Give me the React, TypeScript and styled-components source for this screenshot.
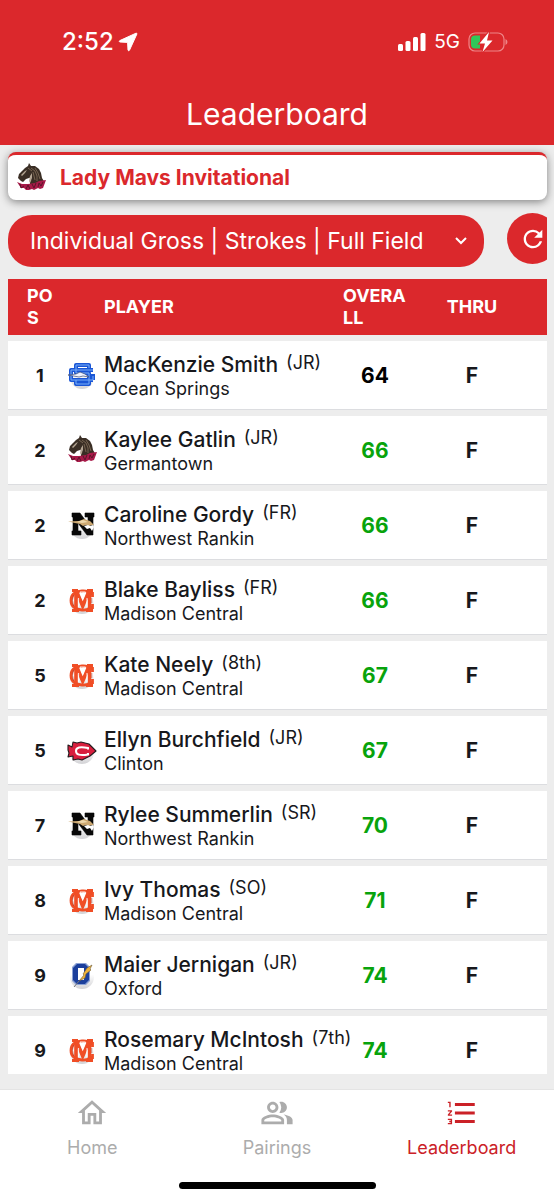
import React from "react";
import styled, { createGlobalStyle } from "styled-components";
import {
  MdFormatListNumbered,
  MdOutlineHome,
  MdOutlinePeopleAlt,
  MdRefresh,
} from "react-icons/md";

const RED = "#db282c";

const GlobalStyle = createGlobalStyle`
  * { box-sizing: border-box; }
  body { margin: 0; background: #ededed; }
  body, button, select {
    font-family: Inter, "Liberation Sans", sans-serif;
  }
`;

const Screen = styled.div`
  display: flex;
  flex-direction: column;
  height: 100vh;
  background: #ededed;
  color: #17181c;
`;

const Header = styled.header`
  flex: none;
  background: ${RED};
  color: #fff;
`;

const StatusBar = styled.div`
  display: flex;
  align-items: center;
  justify-content: space-between;
  height: 84px;
  padding: 0 46px 0 62px;
`;

const StatusGroup = styled.div`
  display: flex;
  align-items: center;
  gap: 8px;
`;

const Clock = styled.time`
  font-size: 24px;
  line-height: 28px;
  font-weight: 500;
  margin-right: -4px;
`;

const Network = styled.span`
  font-size: 19px;
  line-height: 24px;
`;

const Title = styled.h1`
  margin: 0;
  padding: 12px 0 13px;
  font-size: 30px;
  line-height: 36px;
  font-weight: 400;
  text-align: center;
`;

const Main = styled.main`
  flex: 1;
  min-height: 0;
  display: flex;
  flex-direction: column;
  padding: 7px 7px 15px 8px;
`;

const EventCard = styled.section`
  flex: none;
  display: flex;
  align-items: center;
  gap: 14px;
  height: 48px;
  padding: 0 8px;
  background: #fff;
  border-top: 3px solid ${RED};
  border-radius: 8px;
  box-shadow: 0 2px 8px rgba(0, 0, 0, 0.45);
`;

const EventName = styled.h2`
  margin: 0;
  color: ${RED};
  font-size: 21px;
  line-height: 28px;
  font-weight: 700;
`;

const Filters = styled.div`
  flex: none;
  display: flex;
  align-items: center;
  gap: 23px;
  padding: 14px 0 11px;
`;

const SelectWrap = styled.label`
  flex: 1;
  min-width: 0;
  display: grid;
  align-items: center;
  & > * { grid-area: 1 / 1; }
`;

const Select = styled.select`
  appearance: none;
  width: 100%;
  height: 52px;
  padding: 0 40px 0 22px;
  border: 0;
  border-radius: 24px;
  background: ${RED};
  color: #fff;
  font-size: 23px;
  text-overflow: ellipsis;
`;

const Chevron = styled.svg`
  justify-self: end;
  margin-right: 16px;
  pointer-events: none;
`;

const RefreshClip = styled.div`
  width: 40px;
  height: 56px;
  margin: -1px 0;
  overflow: hidden;
`;

const RefreshButton = styled.button`
  display: flex;
  align-items: center;
  justify-content: center;
  width: 51px;
  height: 51px;
  padding: 0;
  border: 0;
  border-radius: 50%;
  background: ${RED};
  color: #fff;
`;

const Board = styled.div`
  flex: 1;
  min-height: 0;
  overflow: hidden auto;
  scrollbar-width: none;
`;

const Table = styled.table`
  width: 100%;
  table-layout: fixed;
  border-collapse: separate;
  border-spacing: 0 6px;
  margin-top: -6px;
`;

const Col = styled.col<{ $width?: number }>`
  width: ${(p) => (p.$width ? `${p.$width}px` : "auto")};
`;

const HeadCell = styled.th<{ $indent?: number; $center?: boolean }>`
  height: 56px;
  padding: 0 0 0 ${(p) => p.$indent ?? 0}px;
  background: ${RED};
  color: #fff;
  font-size: 18px;
  line-height: 22px;
  font-weight: 700;
  text-align: ${(p) => (p.$center ? "center" : "left")};
  word-break: break-all;
`;

const Cell = styled.td`
  height: 69px;
  padding: 0;
  background: #fff;
  border-bottom: 1px solid #dcdde0;
  white-space: nowrap;
`;

const PosCell = styled(Cell)`
  padding-left: 8px;
  font-size: 18px;
  font-weight: 700;
  text-align: center;
`;

const LogoCell = styled(Cell)`
  padding-left: 3px;
  & > svg { display: block; }
`;

const PlayerCell = styled(Cell)`
  padding-top: 2px;
`;

const ScoreCell = styled(Cell)<{ $tone: string }>`
  color: ${(p) => p.$tone};
  font-size: 21px;
  font-weight: 700;
  text-align: center;
`;

const PlayerLine = styled.div`
  display: flex;
  align-items: flex-start;
  gap: 8px;
`;

const PlayerName = styled.span`
  font-size: 21px;
  line-height: 26px;
  font-weight: 500;
`;

const Grade = styled.span`
  font-size: 18px;
  line-height: 22px;
`;

const School = styled.div`
  font-size: 18px;
  line-height: 22px;
`;

const TabBar = styled.nav`
  flex: none;
  display: grid;
  grid-template-columns: repeat(3, 1fr);
  padding-top: 6px;
  background: #fff;
  border-top: 1px solid #e4e4e4;
`;

const Tab = styled.a<{ $active?: boolean }>`
  display: flex;
  flex-direction: column;
  align-items: center;
  gap: 7px;
  color: ${(p) => (p.$active ? "#cb2127" : "#acacac")};
  font-size: 18px;
  line-height: 22px;
  text-decoration: none;
`;

const HomeIndicator = styled.div`
  grid-column: 1 / -1;
  justify-self: center;
  width: 197px;
  height: 7px;
  margin: 23px 0 11px;
  border-radius: 4px;
  background: #000;
`;

type Team = "os" | "mavs" | "nwr" | "mc" | "clinton" | "oxford";

const teamArt: Record<Team, React.ReactNode> = {
  os: (
    <g fill="none" strokeLinejoin="round">
      <g stroke="#1a56d6" strokeWidth="4">
        <path d="M22 8V5H9v8h13v11H9v-4" />
        <path d="M26 10H4v10h22M15 10v3" />
        <path d="M26 14v6" />
      </g>
      <g stroke="#79aef8" strokeWidth="1">
        <path d="M22 8V5H9v8h13v11H9v-4" />
        <path d="M26 10H4v10h22v-4" />
      </g>
      <path d="M1 15l8-1 4-2 5 2 4 3-6-1-4 1z" fill="#eef3ff" stroke="#3b4b72" strokeWidth=".7" />
    </g>
  ),
  mavs: (
    <>
      <path d="M2 15 3 11 6 8 9 5 12 3 13 0l2 3 4 0 4 3 2 4 1 5 3 5-6 1-9 1 0-4 2-4-3 1-3 1-3 3-2-1z" fill="#3a2e25" />
      <path d="M5 12 9 8l2-1-2 3-3 3zM14 13l2-3 0 4-1 4-1 2-1-2z" fill="#b5a694" />
      <path d="M15 5l4 3 2 5 0 5M19 5l3 5 2 6M17 9l2 8M12 5l4 3" stroke="#85715c" fill="none" strokeWidth=".8" />
      <path d="M1 19l5 2 6 0 7-1 4-2 7-1-3 8-3 1-2-1-4 2-2-1-3 1-3 0-2-2-3 0z" fill="#a81a49" />
      <path d="M4 21l1 4 3-2M10 26l2-4 2 4M16 21l2 4 2-5M22 24l1-4 2 3 2-4" stroke="#5a1429" fill="none" strokeWidth="1" />
    </>
  ),
  nwr: (
    <>
      <path d="M5 3h8l8 11V7h-3V3h9v4h-1v18h-6L11 13v8h3v4H5v-4h1V7H5z" fill="#080808" stroke="#080808" strokeWidth=".6" />
      <path d="M1 11.500 12 11l5-2 6 2 4 4-2 0-3 1-3-1-3 1-3-2-5-1z" fill="#cda972" />
      <path d="M10 12l6-2 5 2-6 1z" fill="#efd9ae" />
      <path d="M17 16l4-1 2 1 3-1 1 2-2 4-2-3-3 1z" fill="#fff" />
    </>
  ),
  mc: (
    <g fill="none" stroke="#f04e26">
      <path d="M25.500 7v5M25.500 9.500Q21 5.500 15 6 4 7 4 15.500T15 25q6 .5 10.500-3.500M25.500 19v5" strokeWidth="2.800" />
      <path d="M5 5.500h6M20 5.500h6M5 25.500h7M19 25.500h7" strokeWidth="3" />
      <path d="M9 5v20M22.500 5v20" strokeWidth="3.600" />
      <path d="M9 5l6.700 16L22.500 5" strokeWidth="3.600" strokeLinejoin="miter" />
      <path d="M11.600 13v9M20 13v9M13 7l2.700 7L18.500 7z" stroke="#fff" strokeWidth=".9" />
      <path d="M6.500 10q-2 5 0 11M24.800 13v5" stroke="#a64132" strokeWidth=".6" />
    </g>
  ),
  clinton: (
    <>
      <path d="M1 10l4 2 1-5 4 1 4-1 8 2 7 7-6 5-8 4-4-1-5 1 0-4-5 1 1-4-1-3z" fill="#d81f3e" stroke="#241b1e" strokeWidth="1.100" strokeLinejoin="round" />
      <path d="M21 14.500V13Q9 10.500 9 16t12 3.500V18" fill="none" stroke="#fff" strokeWidth="2" />
    </>
  ),
  oxford: (
    <>
      <path d="M9 3h10l4 4v14l-4 4H9l-4-4V7z" fill="#8ba1d4" />
      <path d="M10 4h8l4 4v12l-4 4h-8l-4-4V8z" fill="#1b3f9c" />
      <path d="M11 8h6v12h-6z" fill="#fff" />
      <path d="M25 5l-5 3-4 6 1 1-5 6 6-3 1-4 5-4-1-1z" fill="#edb23a" stroke="#6b5a39" strokeWidth=".6" />
      <path d="M12 21l-5 6" stroke="#77777c" strokeWidth="1" />
    </>
  ),
};

const TeamLogo = ({ team, id }: { team: Team; id: string }) => (
  <svg width="30" height="30" viewBox="0 0 30 30" aria-hidden="true">
    <defs>
      <linearGradient id={id} x1="0" y1="0" x2="0" y2="1">
        <stop offset=".4" stopColor="#fff" />
        <stop offset="1" stopColor="#d2d2d5" />
      </linearGradient>
    </defs>
    {team !== "mavs" && <circle cx="15" cy="17" r="12" fill={`url(#${id})`} />}
    {teamArt[team]}
  </svg>
);

const players: { pos: number; team: Team; name: string; grade: string; school: string; score: number }[] = [
  { pos: 1, team: "os", name: "MacKenzie Smith", grade: "JR", school: "Ocean Springs", score: 64 },
  { pos: 2, team: "mavs", name: "Kaylee Gatlin", grade: "JR", school: "Germantown", score: 66 },
  { pos: 2, team: "nwr", name: "Caroline Gordy", grade: "FR", school: "Northwest Rankin", score: 66 },
  { pos: 2, team: "mc", name: "Blake Bayliss", grade: "FR", school: "Madison Central", score: 66 },
  { pos: 5, team: "mc", name: "Kate Neely", grade: "8th", school: "Madison Central", score: 67 },
  { pos: 5, team: "clinton", name: "Ellyn Burchfield", grade: "JR", school: "Clinton", score: 67 },
  { pos: 7, team: "nwr", name: "Rylee Summerlin", grade: "SR", school: "Northwest Rankin", score: 70 },
  { pos: 8, team: "mc", name: "Ivy Thomas", grade: "SO", school: "Madison Central", score: 71 },
  { pos: 9, team: "oxford", name: "Maier Jernigan", grade: "JR", school: "Oxford", score: 74 },
  { pos: 9, team: "mc", name: "Rosemary McIntosh", grade: "7th", school: "Madison Central", score: 74 },
];

const LocationArrow = () => (
  <svg width="20" height="20" viewBox="0 0 20 20" aria-hidden="true">
    <path d="M18 1.200 1.800 8.600q-1.400 1 .2 1.400l7.600.4.4 7.600q.5 1.600 1.500.2L18.900 2q.2-1.100-.9-.8z" fill="#fff" stroke="#fff" strokeWidth="1" strokeLinejoin="round" />
  </svg>
);

const Signal = () => (
  <svg width="28" height="18" viewBox="0 0 28 18" aria-hidden="true" fill="#fff">
    <rect x="0" y="11" width="5" height="7" rx="1.500" />
    <rect x="7.500" y="8" width="5" height="10" rx="1.500" />
    <rect x="15" y="4" width="5" height="14" rx="1.500" />
    <rect x="22.500" y="0" width="5" height="18" rx="1.500" />
  </svg>
);

const Battery = () => (
  <svg width="40" height="20" viewBox="0 0 40 20" aria-hidden="true">
    <rect x="1" y="1" width="35" height="18" rx="6" fill="none" stroke="#ee8587" strokeWidth="1.200" />
    <path d="M37.500 7q2 1 2 3t-2 3z" fill="#ee8587" />
    <path d="M7 3.500h5v13H7q-4 0-4-4v-5q0-4 4-4z" fill="#31c759" />
    <path d="M21 0 11.500 11.500h5.500L14.500 20 24.500 8.500H19z" fill="#fff" stroke={RED} strokeWidth="2" paintOrder="stroke" />
  </svg>
);

export default function App() {
  return (
    <Screen>
      <GlobalStyle />
      <Header>
        <StatusBar>
          <StatusGroup>
            <Clock>2:52</Clock>
            <LocationArrow />
          </StatusGroup>
          <StatusGroup>
            <Signal />
            <Network>5G</Network>
            <Battery />
          </StatusGroup>
        </StatusBar>
        <Title>Leaderboard</Title>
      </Header>
      <Main>
        <EventCard>
          <TeamLogo team="mavs" id="event" />
          <EventName>Lady Mavs Invitational</EventName>
        </EventCard>
        <Filters>
          <SelectWrap>
            <Select aria-label="Leaderboard view">
              <option>Individual Gross | Strokes | Full Field</option>
            </Select>
            <Chevron width="14" height="10" viewBox="0 0 14 10" aria-hidden="true">
              <path d="M2 2l5 5 5-5" fill="none" stroke="#fff" strokeWidth="2" />
            </Chevron>
          </SelectWrap>
          <RefreshClip>
            <RefreshButton type="button" aria-label="Refresh">
              <MdRefresh size={28} />
            </RefreshButton>
          </RefreshClip>
        </Filters>
        <Board>
          <Table>
            <colgroup>
              <Col $width={56} />
              <Col $width={40} />
              <Col />
              <Col $width={64} />
              <Col $width={130} />
              <Col $width={10} />
            </colgroup>
            <thead>
              <tr>
                <HeadCell $indent={19}>POS</HeadCell>
                <HeadCell as="td" />
                <HeadCell>PLAYER</HeadCell>
                <HeadCell>OVERALL</HeadCell>
                <HeadCell $center>THRU</HeadCell>
                <HeadCell as="td" />
              </tr>
            </thead>
            <tbody>
              {players.map((p) => (
                <tr key={p.name}>
                  <PosCell>{p.pos}</PosCell>
                  <LogoCell>
                    <TeamLogo team={p.team} id={p.name.replace(" ", "-")} />
                  </LogoCell>
                  <PlayerCell>
                    <PlayerLine>
                      <PlayerName>{p.name}</PlayerName>
                      <Grade>({p.grade})</Grade>
                    </PlayerLine>
                    <School>{p.school}</School>
                  </PlayerCell>
                  <ScoreCell $tone={p.pos === 1 ? "#000" : "#08a30c"}>{p.score}</ScoreCell>
                  <ScoreCell $tone="#17181c">F</ScoreCell>
                  <Cell />
                </tr>
              ))}
            </tbody>
          </Table>
        </Board>
      </Main>
      <TabBar>
        <Tab href="#home">
          <MdOutlineHome size={34} />
          Home
        </Tab>
        <Tab href="#pairings">
          <MdOutlinePeopleAlt size={34} />
          Pairings
        </Tab>
        <Tab href="#leaderboard" $active aria-current="page">
          <MdFormatListNumbered size={34} />
          Leaderboard
        </Tab>
        <HomeIndicator />
      </TabBar>
    </Screen>
  );
}
